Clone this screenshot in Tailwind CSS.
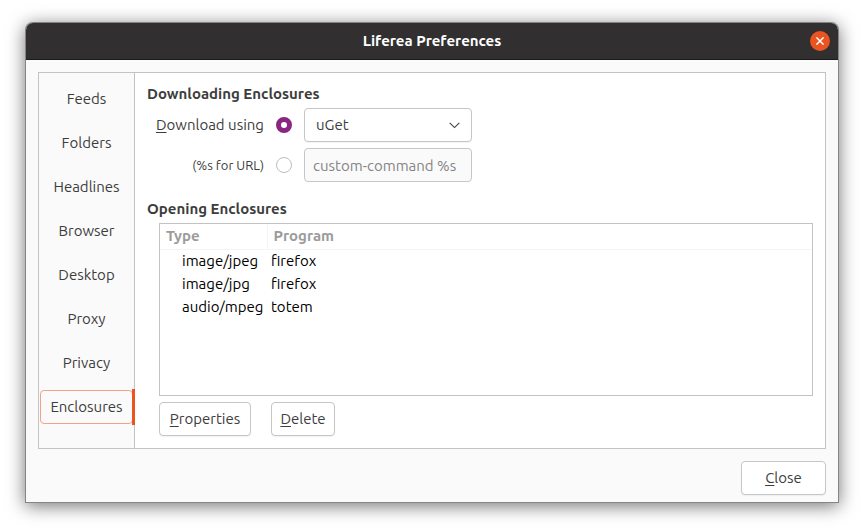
<!DOCTYPE html>
<html lang="en">
<head>
<meta charset="utf-8">
<title>Liferea Preferences</title>
<script src="https://cdn.jsdelivr.net/npm/@tailwindcss/browser@4"></script>
</head>
<body class="flex min-h-screen flex-col bg-white px-[26px] pt-[23px] pb-[29px] font-['Ubuntu','Noto_Sans',sans-serif] text-[15px] leading-[18px] text-[#3d3d3d]">
<main class="flex flex-1 flex-col rounded-t-[7px] bg-[#fafafa] shadow-[0_0_0_1px_#858585,0_3px_18px_1px_rgba(0,0,0,0.55)]">
  <header class="relative flex h-[37px] items-center justify-center rounded-t-[7px] border-b border-[#1c1b1b] bg-[#322f30]">
    <h1 class="font-bold text-white">Liferea Preferences</h1>
    <button type="button" aria-label="Close window" class="absolute right-2 flex size-5 items-center justify-center rounded-full bg-[#e95420]">
      <svg class="size-2" viewBox="0 0 8 8" fill="none" stroke="#fff" stroke-width="1.5"><path d="M.4.4l7.2 7.2M7.6.4L.4 7.6"/></svg>
    </button>
  </header>
  <div class="flex flex-1 flex-col gap-3 px-3 pt-3 pb-[7px]">
    <div class="flex flex-1 border border-[#c3c3c3] bg-white">
      <nav class="flex w-24 flex-col gap-2 border-r border-[#c3c3c3] bg-[#fafafa] pt-2" aria-label="Sections">
        <button type="button" class="h-9">Feeds</button>
        <button type="button" class="h-9">Folders</button>
        <button type="button" class="h-9">Headlines</button>
        <button type="button" class="h-9">Browser</button>
        <button type="button" class="h-9">Desktop</button>
        <button type="button" class="h-9">Proxy</button>
        <button type="button" class="h-9">Privacy</button>
        <button type="button" aria-current="page" class="relative -mr-px flex h-9 py-px pl-px pr-0.5">
          <span class="flex h-full flex-1 items-center justify-center rounded-[4px] border border-[#f3a385]">Enclosures</span>
          <span class="absolute inset-y-0 right-0 w-[3px] bg-[#e95420]"></span>
        </button>
      </nav>
      <div class="flex flex-1 flex-col p-3">
        <h2 class="font-bold">Downloading Enclosures</h2>
        <div class="mt-[5px] ml-2 grid grid-cols-[109px_16px_168px] items-center gap-x-3 gap-y-1.5">
          <label for="tool" class="text-right whitespace-nowrap"><u class="underline-offset-2">D</u>ownload using</label>
          <input type="radio" name="method" checked aria-label="Download using a tool" class="size-4 appearance-none rounded-full border-[5px] border-[#882681] bg-white">
          <div class="relative">
            <select id="tool" class="block h-[34px] w-full appearance-none rounded-[4px] border border-[#c6c6c6] bg-white pl-[11px] leading-[18px] shadow-[0_1px_1px_rgba(0,0,0,0.05)]"><option>uGet</option></select>
            <svg class="pointer-events-none absolute top-3.5 right-3 h-[7px] w-[11px]" viewBox="0 0 11 7" fill="none" stroke="#3d3d3d" stroke-width="1.1"><path d="M.7.9l4.8 4.7L10.3.9"/></svg>
          </div>
          <label for="custom" class="text-right text-[13px] leading-[18px] whitespace-nowrap">(%s for URL)</label>
          <input id="custom" type="radio" name="method" class="size-4 appearance-none rounded-full border border-[#bdbdbd] bg-white">
          <input type="text" value="custom-command %s" aria-label="Custom command" disabled class="block h-[34px] w-full rounded-[4px] border border-[#c6c6c6] bg-[#fafafa] px-2 text-[#858585]">
        </div>
        <h2 class="mt-[18px] font-bold">Opening Enclosures</h2>
        <div class="mt-[5px] ml-3 flex-1 border border-[#c3c3c3] bg-white">
          <table class="w-full table-fixed text-left text-black">
            <colgroup><col class="w-[107px]"><col></colgroup>
            <thead>
              <tr class="h-[25px] border-b border-[#f5f5f5] text-[#9b9b9b]">
                <th class="border-r border-[#f5f5f5] pl-1.5 font-bold">Type</th>
                <th class="pl-1.5 font-bold">Program</th>
              </tr>
            </thead>
            <tbody>
              <tr class="h-[23px]"><td class="pl-[22px] whitespace-nowrap">image/jpeg</td><td class="pl-1">firefox</td></tr>
              <tr class="h-[23px]"><td class="pl-[22px] whitespace-nowrap">image/jpg</td><td class="pl-1">firefox</td></tr>
              <tr class="h-[23px]"><td class="pl-[22px] whitespace-nowrap">audio/mpeg</td><td class="pl-1">totem</td></tr>
            </tbody>
          </table>
        </div>
        <div class="mt-1.5 ml-3 flex gap-5">
          <button type="button" class="h-[34px] min-w-[92px] rounded-[4px] border border-[#c6c6c6] bg-white px-2 shadow-[0_1px_1px_rgba(0,0,0,0.05)]"><u class="underline-offset-2">P</u>roperties</button>
          <button type="button" class="h-[34px] min-w-16 rounded-[4px] border border-[#c6c6c6] bg-white px-2 shadow-[0_1px_1px_rgba(0,0,0,0.05)]"><u class="underline-offset-2">D</u>elete</button>
        </div>
      </div>
    </div>
    <button type="button" class="h-[34px] w-[85px] self-end rounded-[4px] border border-[#c6c6c6] bg-white shadow-[0_1px_1px_rgba(0,0,0,0.05)]"><u class="underline-offset-2">C</u>lose</button>
  </div>
</main>
</body>
</html>
